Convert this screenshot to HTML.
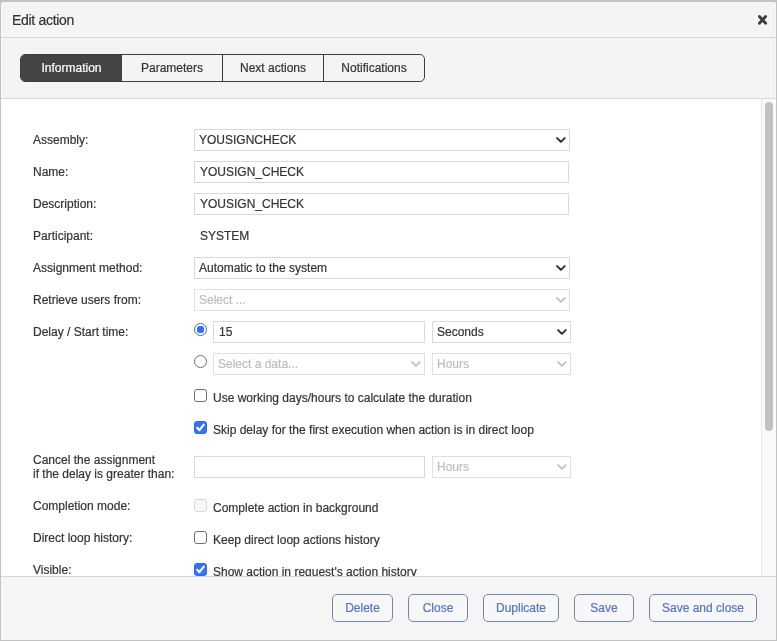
<!DOCTYPE html>
<html><head><meta charset="utf-8">
<style>
*{box-sizing:border-box}
html,body{margin:0;padding:0}
body{width:777px;height:641px;overflow:hidden;background:#c2c2c2;position:relative;font-family:"Liberation Sans",sans-serif;font-size:12px;color:#333}
.a{position:absolute}
.dlg{left:1px;top:2px;width:775px;height:638px;background:#f4f4f4;border-radius:3px 3px 0 0;box-shadow:inset 0 0 0 1px #f8f8f8;overflow:hidden}
.hdr{left:0;top:0;width:775px;height:36px;border-bottom:1px solid #d8d8d8}
.title{left:11px;top:10px;font-size:14px;letter-spacing:-0.3px;line-height:16px;color:#333}
.close{left:756px;top:13px;width:10px;height:10px}
.tabsbar{left:0;top:36px;width:775px;height:61px;border-bottom:1px solid #d8d8d8}
.tabs{left:19px;top:52px;width:405px;height:28px;border:1px solid #3d3d3d;border-radius:5px;overflow:hidden;display:flex;background:#f4f4f4}
.tab{width:101px;height:26px;line-height:26px;text-align:center;color:#333;border-right:1px solid #3d3d3d;flex:none}
.tab.on{width:101px;background:#444;color:#fff;border-right:none}
.tab.last{border-right:none;width:100px}
.content{left:0;top:97px;width:760px;height:477px;background:#fff}
.sb{left:760px;top:97px;width:15px;height:477px;background:#fafafa;border-left:1px solid #e6e6e6}
.thumb{left:3px;top:3px;width:8px;height:329px;background:#c1c1c1;border-radius:4px}
.ftr{left:0;top:574px;width:775px;height:64px;background:#f5f5f5;border-top:1px solid #d8d8d8}
.lbl{left:32px;line-height:14px;white-space:nowrap}
.inp{left:193px;width:375px;height:22px;border:1px solid #d9d9d9;background:#fff;padding-left:5px;line-height:20px;white-space:nowrap}
.btn{top:592px;height:28px;border:1px solid #7387b6;border-radius:5px;color:#5576c4;text-align:center;line-height:26px;background:#f7f7f7}

.f{position:absolute;white-space:nowrap;line-height:14px}
body>div{will-change:transform}
.f,.box,.tab,.title,.btn{-webkit-text-stroke:0.2px}
.box{position:absolute;border:1px solid #d9d9d9;background:#fff;height:22px;line-height:20px;padding-left:5px;white-space:nowrap;color:#333}
.box.sel{padding-left:4px}
.box.dis{color:#bdbdbd;border-color:#e0e0e0}
.chev{position:absolute;width:11px;height:7px}
.cb{position:absolute;width:13px;height:13px;border:1px solid #6e6e6e;border-radius:3px;background:#fff}
.cb.on{background:#3374f6;border-color:#2f68e0}
.cb.dis{border-color:#d8d8d8;background:#f7f7f7}
.rd{position:absolute;width:13px;height:13px;border:1px solid #6e6e6e;border-radius:50%;background:#fff}
.rd.on{border:1px solid #3f68cc;background:#fff}
.rd.on::after{content:"";position:absolute;left:2px;top:2px;width:7px;height:7px;border-radius:2.5px;background:#3070f5}
</style></head><body>
<div class="a dlg">
  <div class="a hdr"></div>
  <div class="a title">Edit action</div>
  <svg class="a" style="left:757px;top:13px" width="9" height="10" viewBox="0 0 9 10"><path d="M1.4 1.5 L7.6 8.3 M7.6 1.5 L1.4 8.3" fill="none" stroke="#3c3c3c" stroke-width="2.8" stroke-linecap="round"/></svg>
  <div class="a tabsbar"></div>
  <div class="a tabs"><div class="tab on">Information</div><div class="tab">Parameters</div><div class="tab">Next actions</div><div class="tab last">Notifications</div></div>
  <div class="a content"></div>
  <div class="a sb"><div class="a thumb"></div></div>
  <div class="a ftr"></div>
  <div class="a btn" style="left:331px;width:61px">Delete</div>
  <div class="a btn" style="left:407px;width:60px">Close</div>
  <div class="a btn" style="left:482px;width:76px">Duplicate</div>
  <div class="a btn" style="left:573px;width:60px">Save</div>
  <div class="a btn" style="left:648px;width:108px">Save and close</div>
</div>
<div style="position:absolute;left:0;top:99px;width:761px;height:477px;overflow:hidden"><div style="position:absolute;left:0;top:-99px;width:761px;height:641px"><div class="f" style="left:33px;top:133px">Assembly:</div>
<div class="f" style="left:33px;top:165px">Name:</div>
<div class="f" style="left:33px;top:197px">Description:</div>
<div class="f" style="left:33px;top:229px">Participant:</div>
<div class="f" style="left:33px;top:261px">Assignment method:</div>
<div class="f" style="left:33px;top:293px">Retrieve users from:</div>
<div class="f" style="left:33px;top:325px">Delay / Start time:</div>
<div class="f" style="left:33px;top:453px">Cancel the assignment<br>if the delay is greater than:</div>
<div class="f" style="left:33px;top:499px">Completion mode:</div>
<div class="f" style="left:33px;top:531px">Direct loop history:</div>
<div class="f" style="left:33px;top:563px">Visible:</div>
<div class="box sel" style="left:194px;top:129px;width:376px">YOUSIGNCHECK</div>
<svg class="chev" style="left:556px;top:137px" viewBox="0 0 11 7"><path d="M1.1 1.1 L4.9 4.9 L8.7 1.1" fill="none" stroke="#333" stroke-width="2" stroke-linecap="round" stroke-linejoin="round"/></svg>
<div class="box" style="left:194px;top:161px;width:375px">YOUSIGN_CHECK</div>
<div class="box" style="left:194px;top:193px;width:375px">YOUSIGN_CHECK</div>
<div class="f" style="left:200px;top:229px">SYSTEM</div>
<div class="box sel" style="left:194px;top:257px;width:376px">Automatic to the system</div>
<svg class="chev" style="left:556px;top:265px" viewBox="0 0 11 7"><path d="M1.1 1.1 L4.9 4.9 L8.7 1.1" fill="none" stroke="#333" stroke-width="2" stroke-linecap="round" stroke-linejoin="round"/></svg>
<div class="box sel dis" style="left:194px;top:289px;width:376px">Select ...</div>
<svg class="chev" style="left:556px;top:297px" viewBox="0 0 11 7"><path d="M1.1 1.1 L4.9 4.9 L8.7 1.1" fill="none" stroke="#c4c4c4" stroke-width="2" stroke-linecap="round" stroke-linejoin="round"/></svg>
<div class="rd on" style="left:194px;top:323px"></div>
<div class="box" style="left:213px;top:321px;width:212px">15</div>
<div class="box sel" style="left:432px;top:321px;width:139px">Seconds</div>
<svg class="chev" style="left:557px;top:329px" viewBox="0 0 11 7"><path d="M1.1 1.1 L4.9 4.9 L8.7 1.1" fill="none" stroke="#333" stroke-width="2" stroke-linecap="round" stroke-linejoin="round"/></svg>
<div class="rd" style="left:194px;top:355px"></div>
<div class="box sel dis" style="left:213px;top:353px;width:212px">Select a data...</div>
<svg class="chev" style="left:411px;top:361px" viewBox="0 0 11 7"><path d="M1.1 1.1 L4.9 4.9 L8.7 1.1" fill="none" stroke="#c4c4c4" stroke-width="2" stroke-linecap="round" stroke-linejoin="round"/></svg>
<div class="box sel dis" style="left:432px;top:353px;width:139px">Hours</div>
<svg class="chev" style="left:557px;top:361px" viewBox="0 0 11 7"><path d="M1.1 1.1 L4.9 4.9 L8.7 1.1" fill="none" stroke="#c4c4c4" stroke-width="2" stroke-linecap="round" stroke-linejoin="round"/></svg>
<div class="cb " style="left:194px;top:389px"></div>
<div class="f" style="left:213px;top:391px">Use working days/hours to calculate the duration</div>
<div class="cb on" style="left:194px;top:421px"></div>
<svg style="position:absolute;left:194px;top:421px" width="13" height="13" viewBox="0 0 13 13"><path d="M3.2 6.8 L5.4 9.2 L9.8 3.6" fill="none" stroke="#fff" stroke-width="2.1" stroke-linecap="round" stroke-linejoin="round"/></svg>
<div class="f" style="left:213px;top:423px">Skip delay for the first execution when action is in direct loop</div>
<div class="box" style="left:194px;top:456px;width:231px"></div>
<div class="box sel dis" style="left:432px;top:456px;width:139px">Hours</div>
<svg class="chev" style="left:557px;top:464px" viewBox="0 0 11 7"><path d="M1.1 1.1 L4.9 4.9 L8.7 1.1" fill="none" stroke="#c4c4c4" stroke-width="2" stroke-linecap="round" stroke-linejoin="round"/></svg>
<div class="cb dis" style="left:194px;top:499px"></div>
<div class="f" style="left:213px;top:501px">Complete action in background</div>
<div class="cb " style="left:194px;top:531px"></div>
<div class="f" style="left:213px;top:533px">Keep direct loop actions history</div>
<div class="cb on" style="left:194px;top:563px"></div>
<svg style="position:absolute;left:194px;top:563px" width="13" height="13" viewBox="0 0 13 13"><path d="M3.2 6.8 L5.4 9.2 L9.8 3.6" fill="none" stroke="#fff" stroke-width="2.1" stroke-linecap="round" stroke-linejoin="round"/></svg>
<div class="f" style="left:213px;top:565px">Show action in request's action history</div></div></div>
</body></html>
